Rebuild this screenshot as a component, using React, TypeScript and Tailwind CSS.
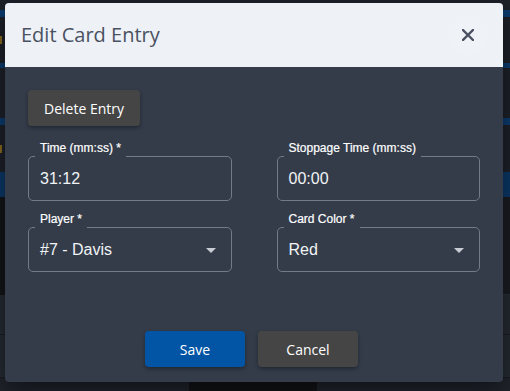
const bodyBg = "bg-[#343c4a]";

function Field({ label, value, select }: { label: string; value: string; select?: boolean }) {
  return (
    <div className="relative h-[45px] rounded-[5px] border border-[#747b87] flex items-center pl-[11px] pr-[14px]">
      <span
        className={`absolute left-[6px] -top-[16px] px-[5px] pb-[4px] ${bodyBg} text-[12px] leading-[14px] text-white whitespace-nowrap`}
        style={{ fontFamily: '"Liberation Sans", Arial, sans-serif', WebkitTextStroke: "0.2px #ffffff" }}
      >
        {label}
      </span>
      <span
        className="flex-1 text-[16px] text-[#f1f3f5]"
        style={{ fontFamily: '"Liberation Sans", Arial, sans-serif' }}
      >
        {value}
      </span>
      {select && (
        <svg width="10" height="5" viewBox="0 0 10 5" className="mr-[1px] mt-[2px]">
          <path d="M0 0 L10 0 L5 5 Z" fill="#c9cdd3" />
        </svg>
      )}
    </div>
  );
}

export default function App() {
  return (
    <div className="relative w-[510px] h-[391px] overflow-hidden bg-[#1d2129]">
      {/* page behind the dialog */}
      <div className="flex flex-col h-full">
        <div className="h-[10px]" />
        <div className="h-[7px] bg-[#0c3c70]" />
        <div className="h-[46px] flex items-center">
          <div className="w-[2px] h-[8px] bg-[#8a6a20]" />
        </div>
        <div className="h-[5px] bg-[#0c3c70]" />
        <div className="h-[50px]" />
        <div className="h-[7px] bg-[#0c3c70]" />
        <div className="h-[47px] flex items-center">
          <div className="w-[2px] h-[8px] bg-[#8a6a20]" />
        </div>
        <div className="h-[25px] bg-[#0b3868]" />
        <div className="h-[98px] flex">
          <div className="w-[189px] bg-[#141518]" />
          <div className="flex-1 bg-[#191c22] border-b border-[#2a2e36]" />
        </div>
        <div className="h-[40px] bg-[#252a33] border-b border-[#1a1d22]" />
        <div className="h-[43px] bg-[#252a33] border-b border-[#1a1d22]" />
        <div className="flex-1 flex">
          <div className="w-[189px] bg-[#20242c]" />
          <div className="w-[128px] bg-[#121316]" />
          <div className="flex-1 bg-[#20242c]" />
        </div>
      </div>

      {/* dialog */}
      <div
        className={`absolute left-[5px] top-[3px] w-[498px] rounded-[4px] overflow-hidden ${bodyBg} shadow-[0_8px_24px_rgba(0,0,0,0.5)]`}
      >
        <div className="h-[64px] bg-[#eef2f7] flex items-center justify-between pl-[16px] pr-[16px]">
          <h2
            className="text-[20px] text-[#4a5161]"
            style={{ fontFamily: '"Open Sans", sans-serif' }}
          >
            Edit Card Entry
          </h2>
          <button className="w-[40px] h-[40px] rounded-full bg-[#eff3f8] flex items-center justify-center mr-[-1px]">
            <svg width="12" height="12" viewBox="0 0 12 12">
              <path d="M1 1 L11 11 M11 1 L1 11" stroke="#4a5161" strokeWidth="2.4" strokeLinecap="square" />
            </svg>
          </button>
        </div>

        <div
          className="flex flex-col px-[23px] pt-[23px] pb-[15px]"
          style={{ fontFamily: '"Open Sans", sans-serif' }}
        >
          <button className="w-[112px] h-[36px] rounded-[4px] bg-[#454545] text-white text-[14px] shadow-[0_2px_4px_rgba(0,0,0,0.35)]">
            Delete Entry
          </button>

          <div className="mt-[30px] grid grid-cols-2 gap-x-[45px] gap-y-[26px]">
            <Field label="Time (mm:ss) *" value="31:12" />
            <Field label="Stoppage Time (mm:ss)" value="00:00" />
            <Field label="Player *" value="#7 - Davis" select />
            <Field label="Card Color *" value="Red" select />
          </div>

          <div className="mt-[59px] flex justify-center gap-[13px] pr-[5px]">
            <button className="w-[100px] h-[36px] rounded-[4px] bg-[#0254a5] text-white text-[14px] shadow-[0_2px_4px_rgba(0,0,0,0.35)]">
              Save
            </button>
            <button className="w-[100px] h-[36px] rounded-[4px] bg-[#454545] text-white text-[14px] shadow-[0_2px_4px_rgba(0,0,0,0.35)]">
              Cancel
            </button>
          </div>
        </div>
      </div>
    </div>
  );
}
